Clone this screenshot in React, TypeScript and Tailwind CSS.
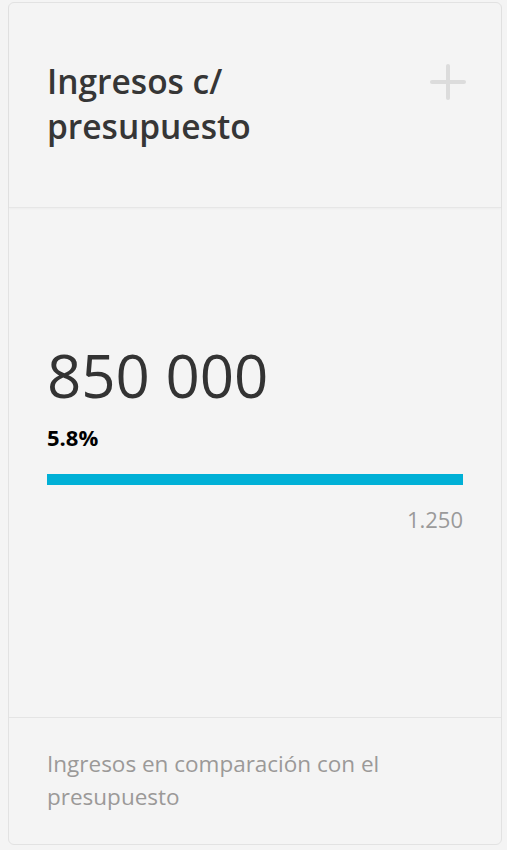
export default function App() {
  return (
    <div
      className="min-h-[850px] bg-[#f4f4f4] pl-[8px] pr-[5px] pt-[2px]"
      style={{ fontFamily: '"Open Sans", "Noto Sans", sans-serif' }}
    >
      <div className="flex h-[843px] flex-col rounded-[6px] border border-[#e2e2e2] bg-[#f4f4f4]">
        <div className="flex h-[205px] shrink-0 items-start justify-between border-b border-[#e6e6e6] pl-[38px] pr-[35px] pt-[56px] shadow-[0_1px_2px_rgba(0,0,0,0.03)]">
          <h2 className="text-[33.5px] font-semibold leading-[45px] text-[#363636]">
            Ingresos c/
            <br />
            presupuesto
          </h2>
          <svg
            width="36"
            height="36"
            viewBox="0 0 36 36"
            className="mt-[5px]"
            fill="none"
            stroke="#dcdcdc"
            strokeWidth="4"
            strokeLinecap="round"
          >
            <path d="M18 2v32M2 18h32" />
          </svg>
        </div>

        <div className="flex flex-1 flex-col px-[38px] pt-[137px]">
          <div className="text-[60px] font-normal leading-[60px] text-[#333]">
            850 000
          </div>
          <div className="mt-[20px] text-[22px] font-bold leading-[24px] text-black">
            5.8%
          </div>
          <div className="mt-[25px] h-[11px] w-full bg-[#00b0d6]" />
          <div className="mt-[20px] text-right text-[22px] leading-[28px] text-[#9a9a9a]">
            1.250
          </div>
        </div>

        <div className="h-[127px] shrink-0 border-t border-[#e4e4e4] px-[38px] pt-[29px]">
          <p className="text-[22.5px] leading-[33px] text-[#9b9998]">
            Ingresos en comparación con el
            <br />
            presupuesto
          </p>
        </div>
      </div>
    </div>
  );
}
